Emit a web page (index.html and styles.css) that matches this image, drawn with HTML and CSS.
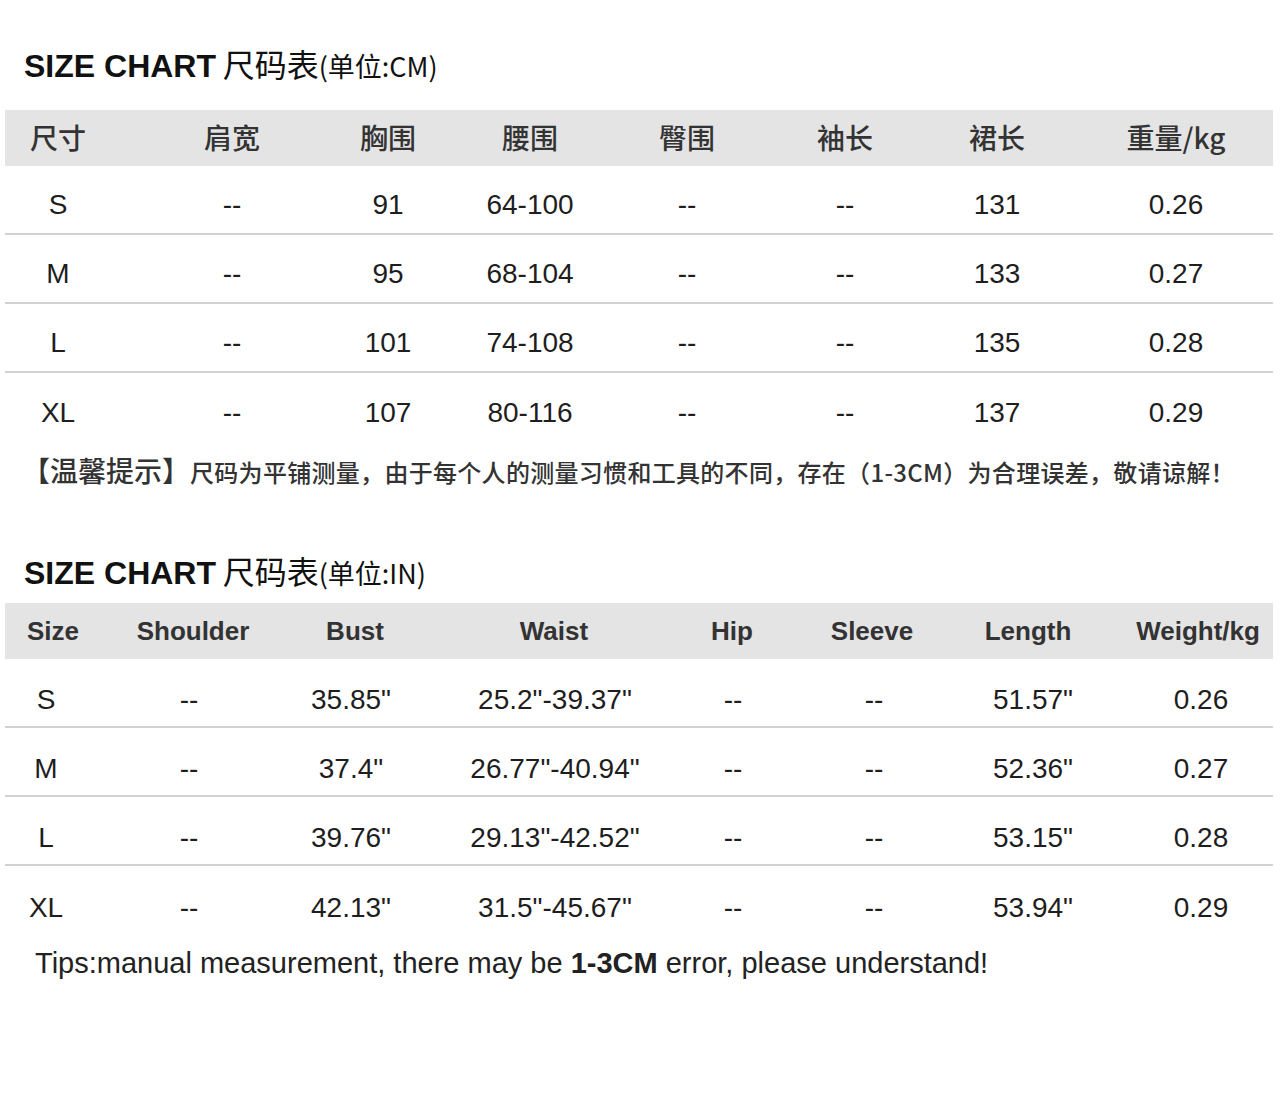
FILE: index.html
```html
<!DOCTYPE html>
<html lang="zh-CN">
<head>
<meta charset="utf-8">
<title>Size Chart</title>
<link rel="stylesheet" href="styles.css">
</head>
<body>
<div class="page">
  <h2 class="title title-cm"><span class="en">SIZE CHART</span> <span class="cn">尺码表</span><span class="unit">(单位:CM)</span></h2>
  <div class="table t-cm">
    <div class="row head">
      <div>尺寸</div><div>肩宽</div><div>胸围</div><div>腰围</div><div>臀围</div><div>袖长</div><div>裙长</div><div class="last">重量/kg</div>
    </div>
    <div class="row body">
      <div>S</div><div>--</div><div>91</div><div>64-100</div><div>--</div><div>--</div><div>131</div><div class="last">0.26</div>
    </div>
    <div class="row body">
      <div>M</div><div>--</div><div>95</div><div>68-104</div><div>--</div><div>--</div><div>133</div><div class="last">0.27</div>
    </div>
    <div class="row body">
      <div>L</div><div>--</div><div>101</div><div>74-108</div><div>--</div><div>--</div><div>135</div><div class="last">0.28</div>
    </div>
    <div class="row body end">
      <div>XL</div><div>--</div><div>107</div><div>80-116</div><div>--</div><div>--</div><div>137</div><div class="last">0.29</div>
    </div>
  </div>
  <p class="note"><span class="note-tag">【温馨提示】</span>尺码为平铺测量，由于每个人的测量习惯和工具的不同，存在（1-3CM）为合理误差，敬请谅解！</p>

  <h2 class="title title-in"><span class="en">SIZE CHART</span> <span class="cn">尺码表</span><span class="unit">(单位:IN)</span></h2>
  <div class="table t-in">
    <div class="row head">
      <div>Size</div><div>Shoulder</div><div>Bust</div><div>Waist</div><div>Hip</div><div>Sleeve</div><div>Length</div><div class="last">Weight/kg</div>
    </div>
    <div class="row body">
      <div>S</div><div>--</div><div>35.85"</div><div>25.2"-39.37"</div><div>--</div><div>--</div><div>51.57"</div><div class="last">0.26</div>
    </div>
    <div class="row body">
      <div>M</div><div>--</div><div>37.4"</div><div>26.77"-40.94"</div><div>--</div><div>--</div><div>52.36"</div><div class="last">0.27</div>
    </div>
    <div class="row body">
      <div>L</div><div>--</div><div>39.76"</div><div>29.13"-42.52"</div><div>--</div><div>--</div><div>53.15"</div><div class="last">0.28</div>
    </div>
    <div class="row body end">
      <div>XL</div><div>--</div><div>42.13"</div><div>31.5"-45.67"</div><div>--</div><div>--</div><div>53.94"</div><div class="last">0.29</div>
    </div>
  </div>
  <p class="tips">Tips:manual measurement, there may be <b>1-3CM</b> error, please understand!</p>
</div>
</body>
</html>
```

FILE: styles.css
```css
html, body {
  margin: 0;
  padding: 0;
  background: #ffffff;
}

.page {
  width: 1268px;
  padding-left: 5px;
  font-family: "Liberation Sans", Arial, "Noto Sans CJK SC", sans-serif;
  color: #222;
}

.title {
  margin: 0;
  padding-left: 19px;
  height: 40px;
  line-height: 40px;
  font-weight: normal;
  white-space: nowrap;
  color: #111;
}

.title-cm { margin-top: 43px; padding-bottom: 3px; }
.title-in { margin-top: 60px; padding-bottom: 2px; }

.title .en {
  font-family: "Liberation Sans", Arial, sans-serif;
  font-weight: bold;
  font-size: 32px;
}

.title .cn {
  font-family: "Noto Sans CJK SC", sans-serif;
  font-size: 32px;
  font-weight: 400;
}

.title .unit {
  font-family: "Noto Sans CJK SC", sans-serif;
  font-size: 27px;
  font-weight: 400;
}

.table { width: 1268px; }
.t-cm { margin-top: 24px; }
.t-in { margin-top: 11px; }

.row {
  display: grid;
  align-items: center;
  text-align: center;
  box-sizing: border-box;
}

.row.head {
  height: 56px;
  background: #e4e4e4;
  color: #333;
}

.row.body {
  height: 69px;
  border-bottom: 2px solid #d2d2d2;
  font-size: 28px;
  color: #1e1e1e;
}

.row.body.end { border-bottom: none; }

.t-cm .row {
  grid-template-columns: 106px 242px 70px 214px 100px 216px 88px 232px;
}
.t-cm .row .last { padding-left: 38px; }
.t-cm .row.head {
  font-family: "Noto Sans CJK SC", sans-serif;
  font-size: 28px;
  font-weight: 500;
  padding-bottom: 3px;
}
.t-cm .row.body { padding-top: 11px; }

.t-in .row.head {
  grid-template-columns: 96px 184px 140px 258px 98px 182px 130px 180px;
  font-size: 26px;
  font-weight: bold;
}
.t-in .row.head .last { padding-left: 30px; }

.t-in .row.body {
  grid-template-columns: 82px 204px 120px 288px 68px 214px 104px 188px;
  padding-top: 15px;
}
.t-in .row.body .last { padding-left: 44px; }

.note {
  margin: 8px 0 0 17px;
  height: 40px;
  line-height: 40px;
  font-family: "Noto Sans CJK SC", sans-serif;
  font-size: 24px;
  font-weight: 500;
  letter-spacing: 0.3px;
  color: #333;
  white-space: nowrap;
}

.note-tag { font-size: 28px; letter-spacing: 0; }

.tips {
  margin: 8px 0 0 30px;
  height: 40px;
  line-height: 40px;
  font-size: 29px;
  color: #222;
  white-space: nowrap;
}

.tips b { font-weight: bold; }
```
